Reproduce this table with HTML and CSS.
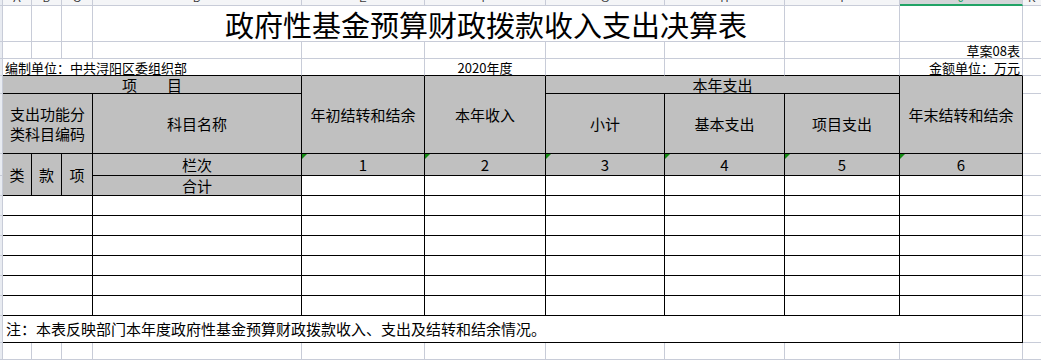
FILE: index.html
```html
<!DOCTYPE html>
<html lang="zh-CN">
<head>
<meta charset="utf-8">
<title>政府性基金预算财政拨款收入支出决算表</title>
<link rel="stylesheet" href="styles.css">
</head>
<body>
<div class="sheet">
  <!-- column header strip -->
  <div class="c rh"></div>
  <div class="c ch"><span>A</span></div>
  <div class="c ch"><span>B</span></div>
  <div class="c ch"><span>C</span></div>
  <div class="c ch"><span>D</span></div>
  <div class="c ch"><span>E</span></div>
  <div class="c ch"><span>F</span></div>
  <div class="c ch"><span>G</span></div>
  <div class="c ch"><span>H</span></div>
  <div class="c ch"><span>I</span></div>
  <div class="c ch sel"><span>J</span></div>
  <div class="c ch end"><span>K</span></div>

  <!-- title row -->
  <div class="c rh"></div>
  <div class="c"></div>
  <div class="c"></div>
  <div class="c"></div>
  <div class="c cs5 title">政府性基金预算财政拨款收入支出决算表</div>
  <div class="c"></div>
  <div class="c"></div>
  <div class="c end"></div>

  <!-- 草案 row -->
  <div class="c rh"></div>
  <div class="c"></div>
  <div class="c"></div>
  <div class="c"></div>
  <div class="c"></div>
  <div class="c"></div>
  <div class="c"></div>
  <div class="c"></div>
  <div class="c"></div>
  <div class="c"></div>
  <div class="c small right">草案08表</div>
  <div class="c end"></div>

  <!-- 编制单位 row -->
  <div class="c rh"></div>
  <div class="c cs4 bb small left">编制单位：中共浔阳区委组织部</div>
  <div class="c bb"></div>
  <div class="c bb small center-b">2020年度</div>
  <div class="c bb"></div>
  <div class="c bb"></div>
  <div class="c bb"></div>
  <div class="c bb small right">金额单位：万元</div>
  <div class="c end"></div>

  <!-- header row 1 -->
  <div class="c rh"></div>
  <div class="c k fill cs4">项　　目</div>
  <div class="c k fill rs2">年初结转和结余</div>
  <div class="c k fill rs2">本年收入</div>
  <div class="c k fill cs3">本年支出</div>
  <div class="c k fill rs2">年末结转和结余</div>
  <div class="c end"></div>

  <!-- header row 2 -->
  <div class="c rh"></div>
  <div class="c k fill cs3 wrap">支出功能分类科目编码</div>
  <div class="c k fill">科目名称</div>
  <div class="c k fill">小计</div>
  <div class="c k fill">基本支出</div>
  <div class="c k fill">项目支出</div>
  <div class="c end"></div>

  <!-- 栏次 row -->
  <div class="c rh"></div>
  <div class="c k fill rs2">类</div>
  <div class="c k fill rs2">款</div>
  <div class="c k fill rs2">项</div>
  <div class="c k fill">栏次</div>
  <div class="c k fill tri">1</div>
  <div class="c k fill tri">2</div>
  <div class="c k fill tri">3</div>
  <div class="c k fill tri">4</div>
  <div class="c k fill tri">5</div>
  <div class="c k fill tri">6</div>
  <div class="c end"></div>

  <!-- 合计 row -->
  <div class="c rh"></div>
  <div class="c k fill">合计</div>
  <div class="c k"></div>
  <div class="c k"></div>
  <div class="c k"></div>
  <div class="c k"></div>
  <div class="c k"></div>
  <div class="c k"></div>
  <div class="c end"></div>

  <!-- data rows -->
  <div class="c rh"></div>
  <div class="c k cs3"></div>
  <div class="c k"></div><div class="c k"></div><div class="c k"></div><div class="c k"></div><div class="c k"></div><div class="c k"></div><div class="c k"></div>
  <div class="c end"></div>

  <div class="c rh"></div>
  <div class="c k cs3"></div>
  <div class="c k"></div><div class="c k"></div><div class="c k"></div><div class="c k"></div><div class="c k"></div><div class="c k"></div><div class="c k"></div>
  <div class="c end"></div>

  <div class="c rh"></div>
  <div class="c k cs3"></div>
  <div class="c k"></div><div class="c k"></div><div class="c k"></div><div class="c k"></div><div class="c k"></div><div class="c k"></div><div class="c k"></div>
  <div class="c end"></div>

  <div class="c rh"></div>
  <div class="c k cs3"></div>
  <div class="c k"></div><div class="c k"></div><div class="c k"></div><div class="c k"></div><div class="c k"></div><div class="c k"></div><div class="c k"></div>
  <div class="c end"></div>

  <div class="c rh"></div>
  <div class="c k cs3"></div>
  <div class="c k"></div><div class="c k"></div><div class="c k"></div><div class="c k"></div><div class="c k"></div><div class="c k"></div><div class="c k"></div>
  <div class="c end"></div>

  <div class="c rh"></div>
  <div class="c k cs3"></div>
  <div class="c k"></div><div class="c k"></div><div class="c k"></div><div class="c k"></div><div class="c k"></div><div class="c k"></div><div class="c k"></div>
  <div class="c end"></div>

  <!-- note row -->
  <div class="c rh"></div>
  <div class="c k cs10 note">注：本表反映部门本年度政府性基金预算财政拨款收入、支出及结转和结余情况。</div>
  <div class="c end"></div>

  <!-- empty row -->
  <div class="c rh"></div>
  <div class="c"></div><div class="c"></div><div class="c"></div><div class="c"></div><div class="c"></div>
  <div class="c"></div><div class="c"></div><div class="c"></div><div class="c"></div><div class="c"></div>
  <div class="c end"></div>
</div>
</body>
</html>
```
FILE: styles.css
```css
html, body {
  margin: 0;
  padding: 0;
  background: #ffffff;
  overflow: hidden;
}

.sheet {
  display: grid;
  width: 1041px;
  height: 360px;
  grid-template-columns: 3px 29px 30px 31px 209px 123px 121px 119px 120px 115px 123px 18px;
  grid-template-rows: 6px 36px 17px 17px 18px 60px 22px 20px 20px 20px 20px 20px 20px 20px 27px 17px;
  font-family: "Noto Sans CJK SC", "Noto Sans", sans-serif;
  color: #000;
}

.c {
  box-sizing: border-box;
  border-right: 1px solid #c8ccd8;
  border-bottom: 1px solid #c8ccd8;
  display: flex;
  align-items: center;
  justify-content: center;
  text-align: center;
  font-size: 15px;
  line-height: 18px;
  min-width: 0;
  min-height: 0;
  white-space: nowrap;
  position: relative;
}

.rh {
  background: #e8ebf1;
}

.ch {
  background: #f4f5f7;
  overflow: hidden;
  align-items: flex-start;
  font-family: "Liberation Sans", sans-serif;
  font-size: 11px;
  color: #3c3c3c;
}

.ch span {
  display: block;
  line-height: 12px;
  margin-top: -8px;
}

.ch.sel {
  background: #d3d5d8;
  border-bottom: 2px solid #21a366;
  color: #21a366;
}

.end {
  border-right: none;
}

.title {
  justify-content: flex-start;
  padding-left: 132px;
  font-size: 29px;
  line-height: 32px;
}

.small {
  font-size: 13px;
  line-height: 15px;
  align-items: flex-end;
}

.left {
  justify-content: flex-start;
  padding-left: 2px;
}

.right {
  justify-content: flex-end;
  padding-right: 2px;
}

.center-b {
  justify-content: center;
}

.bb {
  border-bottom-color: #000;
}

.k {
  border-right-color: #000;
  border-bottom-color: #000;
}

.fill {
  background: #c0c0c0;
}

.wrap {
  white-space: normal;
  line-height: 20px;
  padding: 0 1px;
}

.note {
  justify-content: flex-start;
  padding-left: 3px;
}

.cs3 { grid-column: span 3; }
.cs4 { grid-column: span 4; }
.cs5 { grid-column: span 5; }
.cs10 { grid-column: span 10; }
.rs2 { grid-row: span 2; }

.tri::before {
  content: "";
  position: absolute;
  left: 0;
  top: 0;
  width: 0;
  height: 0;
  border-top: 5px solid #138a13;
  border-right: 5px solid transparent;
}
```
